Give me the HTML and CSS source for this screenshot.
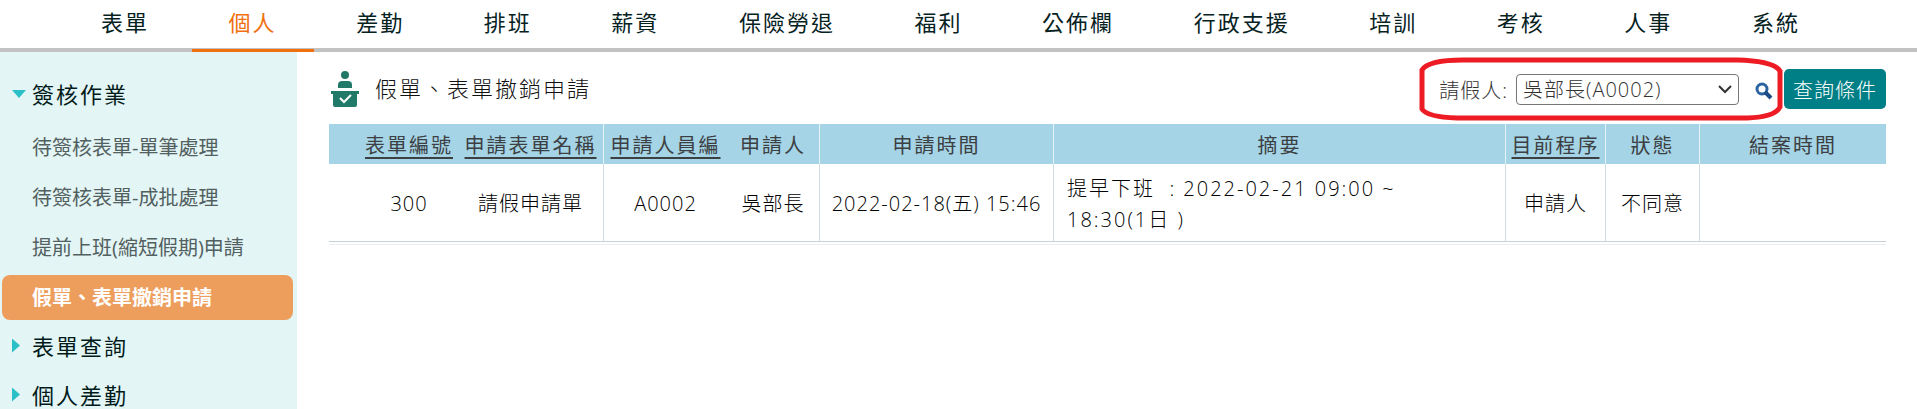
FILE: index.html
```html
<!DOCTYPE html>
<html lang="zh-Hant">
<head>
    <meta charset="UTF-8">
    <meta name="viewport" content="width=device-width, initial-scale=1.0">
    <title>假單、表單撤銷申請</title>
    <link rel="stylesheet" href="styles.css">
</head>
<body>
    <nav class="topnav">
        <a href="#">表單</a>
        <a href="#" class="active">個人</a>
        <a href="#">差勤</a>
        <a href="#">排班</a>
        <a href="#">薪資</a>
        <a href="#">保險勞退</a>
        <a href="#">福利</a>
        <a href="#">公佈欄</a>
        <a href="#">行政支援</a>
        <a href="#">培訓</a>
        <a href="#">考核</a>
        <a href="#">人事</a>
        <a href="#">系統</a>
    </nav>
    <div class="layout">
        <aside class="sidebar">
            <button type="button" class="group open">簽核作業</button>
            <a href="#">待簽核表單-單筆處理</a>
            <a href="#">待簽核表單-成批處理</a>
            <a href="#">提前上班(縮短假期)申請</a>
            <a href="#" class="active">假單、表單撤銷申請</a>
            <button type="button" class="group">表單查詢</button>
            <button type="button" class="group">個人差勤</button>
        </aside>
        <main class="content">
            <div class="toolbar">
                <svg class="title-icon" width="28" height="36" viewBox="0 0 28 36" fill="#217a68">
                    <circle cx="14" cy="4" r="4"/>
                    <path d="M7 17v-3q0-4 4-4h6q4 0 4 4v3z"/>
                    <path d="M0 20h28v3h-2v11q0 2-2 2H4q-2 0-2-2V23H0z"/>
                    <path d="M9 27l4 4 7-7" fill="none" stroke="#fff" stroke-width="2"/>
                </svg>
                <h1>假單、表單撤銷申請</h1>
                <div class="filter">
                    <label for="applicant">請假人:</label>
                    <select id="applicant">
                        <option>吳部長(A0002)</option>
                    </select>
                    <button type="button" class="search-btn" aria-label="搜尋">
                        <svg width="18" height="18" viewBox="0 0 18 18" fill="none" stroke="#2a63a0">
                            <circle cx="7" cy="7" r="5" stroke-width="3"/>
                            <path d="M10 10l6 6" stroke="#1d4c86" stroke-width="4"/>
                        </svg>
                    </button>
                    <!-- 紅框標示 -->
                    <svg class="mark" width="364" height="64" viewBox="0 0 364 64" fill="none" stroke="#ed1c24" stroke-width="5">
                        <path d="M3 13Q9 3 44 3H318Q355 4 361 14V50Q356 60 328 61H38Q8 60 3 52Z"/>
                    </svg>
                </div>
                <button type="button" class="query-btn">查詢條件</button>
            </div>
            <table class="list">
                <colgroup>
                    <col class="c-check">
                    <col class="c-no">
                    <col class="c-form">
                    <col class="c-empno">
                    <col class="c-name">
                    <col class="c-time">
                    <col>
                    <col class="c-step">
                    <col class="c-status">
                    <col class="c-close">
                </colgroup>
                <thead>
                    <tr>
                        <th></th>
                        <th><a href="#">表單編號</a></th>
                        <th class="line"><a href="#">申請表單名稱</a></th>
                        <th><a href="#">申請人員編</a></th>
                        <th class="line">申請人</th>
                        <th class="line">申請時間</th>
                        <th class="line">摘要</th>
                        <th class="line"><a href="#">目前程序</a></th>
                        <th class="line">狀態</th>
                        <th>結案時間</th>
                    </tr>
                </thead>
                <tbody>
                    <tr>
                        <td></td>
                        <td>300</td>
                        <td class="line">請假申請單</td>
                        <td>A0002</td>
                        <td class="line">吳部長</td>
                        <td class="line">2022-02-18(五) 15:46</td>
                        <td class="line summary">提早下班&nbsp; : 2022-02-21 09:00 ~<br>18:30(1日 )</td>
                        <td class="line">申請人</td>
                        <td class="line">不同意</td>
                        <td></td>
                    </tr>
                </tbody>
            </table>
        </main>
    </div>
</body>
</html>
```
FILE: styles.css
```css
* {
    box-sizing: border-box;
}
body {
    font-family: "Open Sans", "Noto Sans CJK TC", sans-serif;
    font-size: 20px;
    font-weight: 300;
    color: #000;
    background-color: #fff;
    margin: 0;
    height: 100vh;
    overflow: hidden;
    display: flex;
    flex-direction: column;
}
a {
    color: inherit;
    text-decoration: none;
}
button, select {
    font: inherit;
    cursor: pointer;
}

/* 主選單 */
.topnav {
    display: flex;
    justify-content: space-between;
    padding: 0 80px 0 64px;
    border-bottom: 4px solid #c2c2c2;
    flex-shrink: 0;
}
.topnav a {
    padding: 0 37px;
    height: 48px;
    line-height: 44px;
    font-size: 22px;
    font-weight: 400;
    letter-spacing: 2px;
    color: #06221f;
    white-space: nowrap;
}
.topnav a.active {
    color: #f07010;
    height: 52px;
    margin-bottom: -4px;
    border-bottom: 3px solid #f07010;
}

.layout {
    flex: 1;
    min-height: 0;
    display: flex;
}

/* 左側選單 */
.sidebar {
    width: 297px;
    flex-shrink: 0;
    padding: 17px 4px 0 2px;
    background-color: #e3f5f5;
    overflow: hidden;
}
.sidebar a {
    display: block;
    height: 45px;
    margin-bottom: 5px;
    padding-left: 30px;
    line-height: 45px;
    font-size: 20px;
    font-weight: 400;
    color: #52605f;
    border-radius: 8px;
}
.sidebar a.active {
    background-color: #ed9d5c;
    color: #fff;
    font-weight: 700;
}
.sidebar .group {
    display: flex;
    align-items: center;
    width: 100%;
    height: 41px;
    margin-bottom: 8px;
    padding: 0 0 0 10px;
    border: none;
    background: none;
    font-size: 22px;
    font-weight: 400;
    line-height: 24px;
    letter-spacing: 2px;
    color: #001a1a;
}
.sidebar .group.open {
    height: 50px;
    margin-bottom: 6px;
}
.group::before {
    content: "";
    width: 8px;
    height: 14px;
    margin-right: 12px;
    background-color: #2bc0c8;
    clip-path: polygon(0 0, 100% 50%, 0 100%);
}
.group.open::before {
    width: 14px;
    height: 8px;
    margin-right: 6px;
    clip-path: polygon(0 0, 100% 0, 50% 100%);
}

/* 內容 */
.content {
    flex: 1;
    min-width: 0;
    padding: 17px 31px 0 32px;
}
.toolbar {
    display: flex;
    align-items: center;
    height: 40px;
    margin-bottom: 15px;
}
.title-icon {
    margin: 0 16px 0 2px;
}
h1 {
    margin: 0;
    padding-bottom: 4px;
    font-size: 22px;
    font-weight: 300;
    letter-spacing: 2px;
    color: #111;
}
.filter {
    position: relative;
    display: flex;
    align-items: center;
    margin-left: auto;
}
.filter label {
    margin-right: 8px;
    letter-spacing: 1px;
    color: #333;
}
.filter select {
    width: 223px;
    height: 31px;
    padding: 0 6px;
    letter-spacing: 1px;
    color: #333;
    border: 1px solid #767676;
    border-radius: 4px;
    appearance: none;
    background: #fff url("data:image/svg+xml,%3Csvg xmlns='http://www.w3.org/2000/svg' width='14' height='9' fill='none' stroke='%23333' stroke-width='2'%3E%3Cpath d='M1 1l6 6 6-6'/%3E%3C/svg%3E") no-repeat right 6px center;
}
.search-btn {
    display: flex;
    margin: 4px 11px 0 16px;
    padding: 0;
    border: none;
    background: none;
}
.mark {
    position: absolute;
    right: 1px;
    top: 50%;
    transform: translateY(-50%);
    pointer-events: none;
}
.query-btn {
    width: 102px;
    height: 40px;
    padding: 0;
    border: none;
    border-radius: 5px;
    background-color: #007f86;
    color: #fff;
    letter-spacing: 1px;
}

/* 申請清單 */
.list {
    width: 100%;
    table-layout: fixed;
    border-collapse: separate;
    border-spacing: 0;
    border-bottom: 1px solid #c6d0d5;
    box-shadow: 0 2px 0 #fff, 0 3px 0 #e8f0f0;
}
.c-check { width: 31px; }
.c-no { width: 98px; }
.c-form { width: 146px; }
.c-empno { width: 123px; }
.c-name { width: 93px; }
.c-time { width: 234px; }
.c-step { width: 100px; }
.c-status { width: 94px; }
.c-close { width: 186px; }
.list th {
    height: 40px;
    padding: 0;
    font-weight: 400;
    letter-spacing: 2px;
    white-space: nowrap;
    color: #3c4043;
    background-color: #a5d4e6;
}
.list th a {
    text-decoration: underline;
    text-decoration-thickness: 2px;
    text-underline-offset: 4px;
}
.list td {
    height: 77px;
    padding: 2px 0 0;
    text-align: center;
    line-height: 31px;
    letter-spacing: 1px;
    white-space: nowrap;
}
.list th.line {
    border-right: 1px solid #e6f3f8;
}
.list td.line {
    border-right: 1px solid #cfdde3;
}
.list td.summary {
    padding-left: 13px;
    text-align: left;
    letter-spacing: 2px;
}
```
